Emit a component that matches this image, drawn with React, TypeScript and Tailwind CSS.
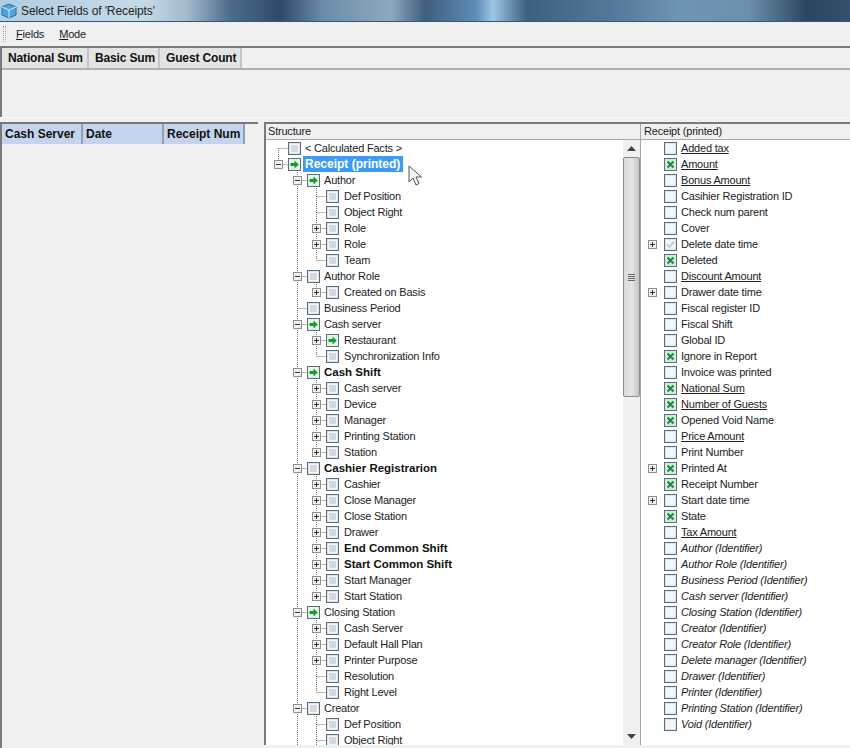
import React from "react";

type Mark = "arrow" | "grey" | "empty" | "x" | "tick";

type TreeRow = {
  text: string;
  level: number;
  exp?: "+" | "-";
  mark?: Mark;
  bold?: boolean;
  last?: boolean;
  selected?: boolean;
};

const tree: TreeRow[] = [
  { text: "< Calculated Facts >", level: 0 },
  { text: "Receipt (printed)", level: 0, exp: "-", mark: "arrow", bold: true, selected: true },
  { text: "Author", level: 1, exp: "-", mark: "arrow" },
  { text: "Def Position", level: 2 },
  { text: "Object Right", level: 2 },
  { text: "Role", level: 2, exp: "+" },
  { text: "Role", level: 2, exp: "+" },
  { text: "Team", level: 2, last: true },
  { text: "Author Role", level: 1, exp: "-" },
  { text: "Created on Basis", level: 2, exp: "+", last: true },
  { text: "Business Period", level: 1 },
  { text: "Cash server", level: 1, exp: "-", mark: "arrow" },
  { text: "Restaurant", level: 2, exp: "+", mark: "arrow" },
  { text: "Synchronization Info", level: 2, last: true },
  { text: "Cash Shift", level: 1, exp: "-", mark: "arrow", bold: true },
  { text: "Cash server", level: 2, exp: "+" },
  { text: "Device", level: 2, exp: "+" },
  { text: "Manager", level: 2, exp: "+" },
  { text: "Printing Station", level: 2, exp: "+" },
  { text: "Station", level: 2, exp: "+", last: true },
  { text: "Cashier Registrarion", level: 1, exp: "-", bold: true },
  { text: "Cashier", level: 2, exp: "+" },
  { text: "Close Manager", level: 2, exp: "+" },
  { text: "Close Station", level: 2, exp: "+" },
  { text: "Drawer", level: 2, exp: "+" },
  { text: "End Common Shift", level: 2, exp: "+", bold: true },
  { text: "Start Common Shift", level: 2, exp: "+", bold: true },
  { text: "Start Manager", level: 2, exp: "+" },
  { text: "Start Station", level: 2, exp: "+", last: true },
  { text: "Closing Station", level: 1, exp: "-", mark: "arrow" },
  { text: "Cash Server", level: 2, exp: "+" },
  { text: "Default Hall Plan", level: 2, exp: "+" },
  { text: "Printer Purpose", level: 2, exp: "+" },
  { text: "Resolution", level: 2 },
  { text: "Right Level", level: 2, last: true },
  { text: "Creator", level: 1, exp: "-" },
  { text: "Def Position", level: 2 },
  { text: "Object Right", level: 2 },
];

type FieldRow = { text: string; mark?: Mark; u?: boolean; plus?: boolean; i?: boolean };

const fields: FieldRow[] = [
  { text: "Added tax", u: true },
  { text: "Amount", mark: "x", u: true },
  { text: "Bonus Amount", u: true },
  { text: "Casihier Registration ID" },
  { text: "Check num parent" },
  { text: "Cover" },
  { text: "Delete date time", mark: "tick", plus: true },
  { text: "Deleted", mark: "x" },
  { text: "Discount Amount", u: true },
  { text: "Drawer date time", plus: true },
  { text: "Fiscal register ID" },
  { text: "Fiscal Shift" },
  { text: "Global ID" },
  { text: "Ignore in Report", mark: "x" },
  { text: "Invoice was printed" },
  { text: "National Sum", mark: "x", u: true },
  { text: "Number of Guests", mark: "x", u: true },
  { text: "Opened Void Name", mark: "x" },
  { text: "Price Amount", u: true },
  { text: "Print Number" },
  { text: "Printed At", mark: "x", plus: true },
  { text: "Receipt Number", mark: "x" },
  { text: "Start date time", plus: true },
  { text: "State", mark: "x" },
  { text: "Tax Amount", u: true },
  { text: "Author (Identifier)", i: true },
  { text: "Author Role (Identifier)", i: true },
  { text: "Business Period (Identifier)", i: true },
  { text: "Cash server (Identifier)", i: true },
  { text: "Closing Station (Identifier)", i: true },
  { text: "Creator (Identifier)", i: true },
  { text: "Creator Role (Identifier)", i: true },
  { text: "Delete manager (Identifier)", i: true },
  { text: "Drawer (Identifier)", i: true },
  { text: "Printer (Identifier)", i: true },
  { text: "Printing Station (Identifier)", i: true },
  { text: "Void (Identifier)", i: true },
];

function Check({ mark = "grey" }: { mark?: Mark }) {
  return (
    <svg width="13" height="13" viewBox="0 0 13 13" className="shrink-0">
      <rect x="0.5" y="0.5" width="12" height="12" fill="#f4f7f9" stroke="#5a6e7e" />
      <rect x="1.5" y="1.5" width="10" height="10" fill="none" stroke="#dfe5ea" />
      {mark === "grey" && <rect x="3" y="3" width="7" height="7" fill="#d3d9df" />}
      {mark === "arrow" && (
        <>
          <rect x="1" y="1" width="11" height="11" fill="#e6f5e6" />
          <path d="M2.5 5h4V2.5L10.8 6.5 6.5 10.5V8h-4z" fill="#1a9a34" />
        </>
      )}
      {mark === "x" && (
        <>
          <rect x="1" y="1" width="11" height="11" fill="#d5ecd8" />
          <path d="M3.5 3.5l6 6M9.5 3.5l-6 6" stroke="#178a3a" strokeWidth="2" />
        </>
      )}
      {mark === "tick" && <path d="M3 6.5l2.5 2.5L10 3.5" fill="none" stroke="#c8ced3" strokeWidth="2" />}
    </svg>
  );
}

// one 19x16 cell of the tree: guide lines and the +/- box
function TreeCell({ up, down, right, exp }: { up?: boolean; down?: boolean; right?: boolean; exp?: "+" | "-" }) {
  return (
    <svg width="19" height="16" viewBox="0 0 19 16" className="shrink-0">
      {up && <line x1="9.5" y1="0" x2="9.5" y2="8" stroke="#777" strokeDasharray="1 1" />}
      {down && <line x1="9.5" y1="8" x2="9.5" y2="16" stroke="#777" strokeDasharray="1 1" />}
      {right && <line x1="9.5" y1="8.5" x2="19" y2="8.5" stroke="#777" strokeDasharray="1 1" />}
      {exp && (
        <>
          <rect x="5.5" y="4.5" width="8" height="8" fill="#f1f1f1" stroke="#8f8f8f" />
          <line x1="7" y1="8.5" x2="12" y2="8.5" stroke="#333" />
          {exp === "+" && <line x1="9.5" y1="6" x2="9.5" y2="11" stroke="#333" />}
        </>
      )}
    </svg>
  );
}

function TreeLine({ row, index }: { row: TreeRow; index: number }) {
  const down = row.level === 2 ? !row.last : row.level === 1 || index === 0;
  return (
    <div className="relative flex h-4 items-center pl-[3px] whitespace-nowrap">
      {row.level > 0 && <TreeCell />}
      {row.level > 1 && <TreeCell up down />}
      <TreeCell up={index > 0} down={down} right exp={row.exp} />
      <Check mark={row.mark} />
      <span
        className={
          (row.level === 2 ? "ml-[3px] " : "ml-[2px] ") +
          "px-[2px] leading-4 " +
          (row.selected
            ? "bg-[#3d9bf3] pr-[3px] text-[12px] font-bold tracking-normal text-white"
            : row.bold
              ? "text-[11.5px] font-bold tracking-normal text-[#111]"
              : "text-[#1c1c1c]")
        }
      >
        {row.text}
      </span>
      {row.selected && (
        <svg width="14" height="21" viewBox="0 0 14 21" className="absolute top-[9px] left-[142px]">
          <path d="M1 1v16l4-4 3 7 3-1.400-3-6.600h5.500z" fill="#f4f4f4" stroke="#555" />
        </svg>
      )}
    </div>
  );
}

function FieldLine({ row }: { row: FieldRow }) {
  return (
    <div className="flex h-4 items-center whitespace-nowrap">
      <div className="w-[23px] shrink-0 pl-[2px]">{row.plus && <TreeCell exp="+" />}</div>
      <Check mark={row.mark ?? "empty"} />
      <span className={"ml-[4px] leading-4 text-[#1c1c1c] " + (row.u ? "underline " : "") + (row.i ? "italic" : "")}>
        {row.text}
      </span>
    </div>
  );
}

function Scrollbar() {
  return (
    <div className="flex w-[17px] shrink-0 flex-col bg-[#f0f0f0]">
      <div className="flex h-[17px] shrink-0 items-center justify-center">
        <svg width="9" height="5" viewBox="0 0 9 5">
          <path d="M4.5 0L9 5H0z" fill="#444" />
        </svg>
      </div>
      <div className="flex h-[240px] shrink-0 items-center justify-center rounded-[2px] border border-[#8b8b8b] bg-gradient-to-r from-[#d9d9d9] via-[#e6e6e6] to-[#c4c4c4]">
        <div className="flex w-[7px] flex-col gap-[1px]">
          <div className="h-[1px] bg-[#666]" />
          <div className="h-[1px] bg-[#666]" />
          <div className="h-[1px] bg-[#666]" />
          <div className="h-[1px] bg-[#666]" />
        </div>
      </div>
      <div className="flex-1" />
      <div className="flex h-[17px] shrink-0 items-center justify-center">
        <svg width="9" height="5" viewBox="0 0 9 5">
          <path d="M0 0h9L4.5 5z" fill="#444" />
        </svg>
      </div>
    </div>
  );
}

function TopField({ label, w }: { label: string; w: string }) {
  return (
    <div
      className={
        "flex items-center border-r-2 border-[#c4c4c4] bg-[#e4e4e4] pl-[6px] text-[12px] font-bold tracking-[-0.15px] whitespace-nowrap text-[#111] " +
        w
      }
    >
      {label}
    </div>
  );
}

function LeftColumn({ label, w }: { label: string; w: string }) {
  return (
    <div
      className={
        "flex items-center border-r-2 border-[#8fa0b8] bg-[#c5d3ed] pl-[3px] text-[12px] font-bold tracking-normal whitespace-nowrap text-[#111] " +
        w
      }
    >
      {label}
    </div>
  );
}

export default function App() {
  return (
    <div className="flex h-[748px] w-[850px] flex-col overflow-hidden bg-[#f0f0f0] font-['Liberation_Sans',Arial,sans-serif] text-[11px] tracking-[-0.2px] text-[#1c1c1c]">
      {/* title bar */}
      <div className="flex h-[22px] shrink-0 items-center border-b border-[#2d5a80] bg-[linear-gradient(90deg,#b0cde2_0%,#c6dae6_17%,#a3bacb_22%,#4e6d8c_27%,#2f4a66_33%,#6b8ca8_38%,#8fa9bd_46%,#3f5d7d_50%,#5f8db5_56%,#9cc6e6_58%,#3f5f80_62%,#55789a_72%,#7094b4_80%,#6d90ac_88%,#2c4560_95%,#35506c_100%)]">
        <svg width="16" height="16" viewBox="0 0 16 16" className="ml-[1px] shrink-0">
          <path d="M1 4l7-3 7 3v8l-7 3-7-3z" fill="#4ea4dc" stroke="#1f6ea8" />
          <path d="M1 4l7 3 7-3M8 7v8" fill="none" stroke="#d5ecf8" />
        </svg>
        <span className="ml-[4px] text-[12px] tracking-[-0.1px] text-[#222]">Select Fields of 'Receipts'</span>
      </div>

      {/* menu */}
      <div className="flex h-[24px] shrink-0 items-center bg-[#f0f0f0]">
        <div className="ml-[3px] h-[16px] w-[3px] border-x border-dotted border-[#aaa]" />
        <span className="ml-[10px]">
          <span className="underline">F</span>ields
        </span>
        <span className="ml-[15px]">
          <span className="underline">M</span>ode
        </span>
      </div>

      {/* data fields */}
      <div className="h-[71px] shrink-0 border-t-2 border-l-2 border-[#7a7a7a] bg-[#f0f0f0]">
        <div className="flex h-[22px] border-b-2 border-[#b0b0b0]">
          <TopField label="National Sum" w="w-[87px]" />
          <TopField label="Basic Sum" w="w-[71px]" />
          <TopField label="Guest Count" w="w-[82px]" />
        </div>
      </div>

      <div className="h-[5px] shrink-0 border-t border-[#fafafa]" />

      {/* lower area */}
      <div className="flex min-h-0 flex-1">
        <div className="w-[258px] shrink-0 border-t-2 border-l-2 border-[#7a7a7a]">
          <div className="flex h-[20px] w-[243px]">
            <LeftColumn label="Cash Server" w="w-[81px]" />
            <LeftColumn label="Date" w="w-[81px]" />
            <LeftColumn label="Receipt Num" w="w-[81px]" />
          </div>
        </div>

        <div className="mb-[3px] ml-[6px] flex min-w-0 flex-1 flex-col border-t-2 border-l-2 border-[#7a7a7a]">
          <div className="flex h-[16px] shrink-0 border-b border-[#a8a8a8] leading-[15px]">
            <div className="w-[375px] shrink-0 border-r border-[#a8a8a8] pl-[2px]">Structure</div>
            <div className="flex-1 pl-[3px]">Receipt (printed)</div>
          </div>
          <div className="flex min-h-0 flex-1 bg-white">
            <div className="flex w-[375px] shrink-0 border-r border-[#a8a8a8]">
              <div className="min-w-0 flex-1 overflow-hidden">
                {tree.map((row, i) => (
                  <TreeLine key={i} row={row} index={i} />
                ))}
              </div>
              <Scrollbar />
            </div>
            <div className="min-w-0 flex-1 overflow-hidden">
              {fields.map((row, i) => (
                <FieldLine key={i} row={row} />
              ))}
            </div>
          </div>
        </div>
      </div>
    </div>
  );
}
